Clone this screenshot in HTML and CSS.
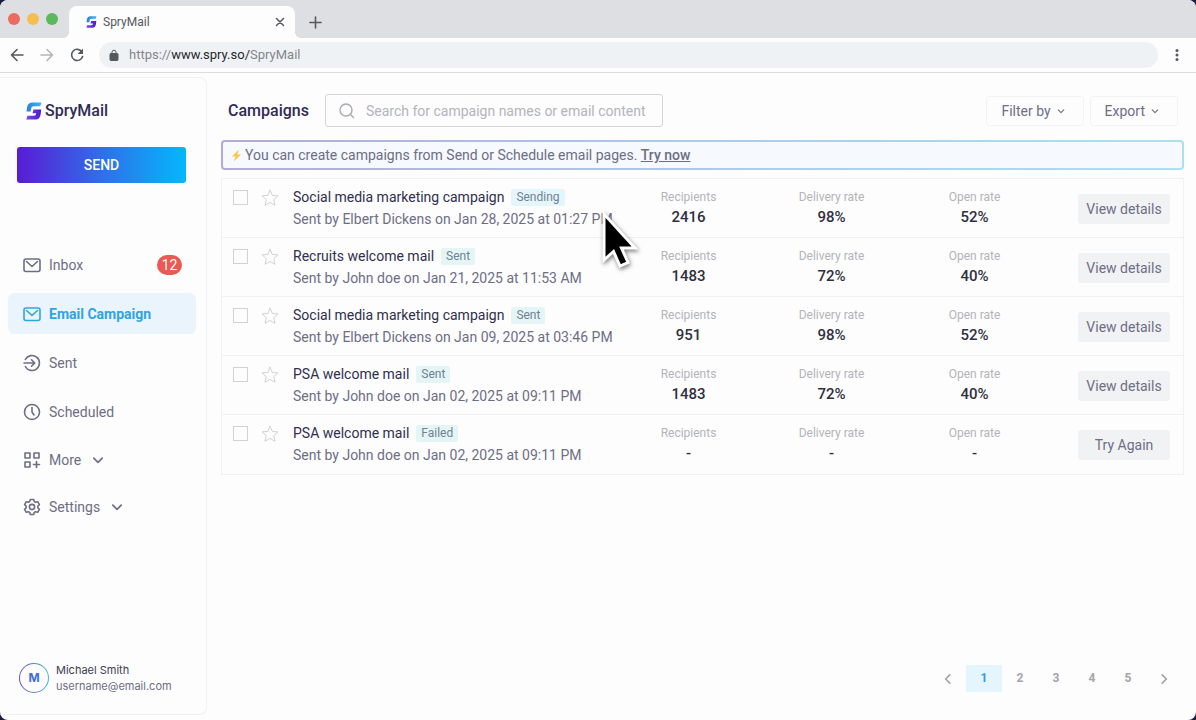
FILE: index.html
```html
<!DOCTYPE html>
<html lang="en">
<head>
    <meta charset="UTF-8">
    <meta name="viewport" content="width=device-width, initial-scale=1.0">
    <title>SpryMail</title>
    <link rel="stylesheet" href="styles.css">
</head>
<body>

<!-- Shared icons -->
<svg class="sprite" aria-hidden="true">
    <defs>
        <linearGradient id="logoTop" x1="0" y1="0" x2="1" y2="0">
            <stop offset="0" stop-color="#2b7de0"/>
            <stop offset="1" stop-color="#35bdf0"/>
        </linearGradient>
        <linearGradient id="logoBottom" x1="0" y1="0" x2="1" y2="0">
            <stop offset="0" stop-color="#7b4be8"/>
            <stop offset="1" stop-color="#4a1ad0"/>
        </linearGradient>
    </defs>
    <symbol id="logo" viewBox="0 0 16 18">
        <path fill="url(#logoTop)" d="M6.500 0.500H15.500L14.200 4.300H7.500Q5.600 4.300 5.300 6L4.800 9.500H0.500L1.200 5Q2 0.500 6.500 0.500z"/>
        <path fill="url(#logoBottom)" d="M7.500 7.500H15.200L14.700 12Q14 17.500 9.500 17.500H0.300L1.500 13.800H8Q10 13.800 10.300 11.300H6.500z"/>
    </symbol>
    <symbol id="mail" viewBox="0 0 18 18">
        <rect x="1" y="3" width="16" height="12.500" rx="2"/>
        <path d="M3.500 5.500L9 10.500l5.500-5"/>
    </symbol>
    <symbol id="chevron" viewBox="0 0 10 10">
        <path d="M1.500 3.500L5 7l3.500-3.500"/>
    </symbol>
    <symbol id="star" viewBox="0 0 18 18">
        <path d="M9 1.200l2.300 5.200 5.700.5-4.300 3.800 1.300 5.600L9 13.400l-5 2.900 1.300-5.600L1 6.900l5.700-.5z"/>
    </symbol>
</svg>

<div class="window">
    <header class="browser">
        <div class="tab-bar">
            <div class="lights">
                <span class="light red"></span>
                <span class="light yellow"></span>
                <span class="light green"></span>
            </div>
            <div class="tab">
                <svg class="tab-logo"><use href="#logo"/></svg>
                <span class="tab-title">SpryMail</span>
                <button class="plain-btn" aria-label="Close tab">
                    <svg class="icon-close" viewBox="0 0 10 10"><path d="M1.500 1.500l7 7M8.500 1.500l-7 7"/></svg>
                </button>
            </div>
            <button class="plain-btn" aria-label="New tab">
                <svg class="icon-plus" viewBox="0 0 14 14"><path d="M7 1v12M1 7h12"/></svg>
            </button>
        </div>
        <div class="toolbar">
            <button class="plain-btn" aria-label="Back">
                <svg class="icon-nav" viewBox="0 0 16 16"><path d="M14 8H2.500M8 2.500L2.500 8 8 13.500"/></svg>
            </button>
            <button class="plain-btn" aria-label="Forward">
                <svg class="icon-nav muted" viewBox="0 0 16 16"><path d="M2 8h11.500M8 2.500L13.500 8 8 13.500"/></svg>
            </button>
            <button class="plain-btn" aria-label="Reload">
                <svg class="icon-nav" viewBox="0 0 16 16"><path d="M13 5A5.600 5.600 0 1 0 13.600 9.500"/><path class="filled" d="M14 1.500v5.500H8.500z"/></svg>
            </button>
            <div class="address">
                <svg class="icon-lock" viewBox="0 0 10 12"><rect x="1" y="4.500" width="8" height="7" rx="1"/><path d="M3 5V3.200a2 2 0 0 1 4 0V5"/></svg>
                <span class="url">https://<b>www.spry.so/</b>SpryMail</span>
            </div>
            <button class="plain-btn" aria-label="Menu">
                <svg class="icon-dots" viewBox="0 0 4 14"><circle cx="2" cy="2.500" r="1.500"/><circle cx="2" cy="7" r="1.500"/><circle cx="2" cy="11.500" r="1.500"/></svg>
            </button>
        </div>
    </header>

    <div class="app">
        <aside class="sidebar">
            <div class="brand">
                <svg class="brand-logo"><use href="#logo"/></svg>
                <span>SpryMail</span>
            </div>
            <button class="send-btn">SEND</button>

            <nav class="nav">
                <a class="nav-item" href="#">
                    <svg class="icon"><use href="#mail"/></svg>
                    <span>Inbox</span>
                    <span class="count">12</span>
                </a>
                <a class="nav-item active" href="#">
                    <svg class="icon"><use href="#mail"/></svg>
                    <span>Email Campaign</span>
                </a>
                <a class="nav-item" href="#">
                    <svg class="icon" viewBox="0 0 18 18"><path d="M2.300 5.500a7.500 7.500 0 1 1 0 7M1 9h10.500M8.500 5.800L11.700 9l-3.200 3.200"/></svg>
                    <span>Sent</span>
                </a>
                <a class="nav-item" href="#">
                    <svg class="icon" viewBox="0 0 18 18"><circle cx="9" cy="9" r="7.500"/><path d="M9 4.500V9l2 3"/></svg>
                    <span>Scheduled</span>
                </a>
                <button class="nav-item nav-toggle">
                    <svg class="icon" viewBox="0 0 18 18"><rect x="2" y="2" width="5" height="5"/><rect x="11" y="2" width="5" height="5"/><rect x="2" y="11" width="5" height="5"/><path d="M13.500 10.500v6M10.500 13.500h6"/></svg>
                    <span>More</span>
                    <svg class="chevron"><use href="#chevron"/></svg>
                </button>
                <button class="nav-item nav-toggle">
                    <svg class="icon" viewBox="0 0 18 18"><path d="M7.300 1.500h3.400l.6 2.100 1.200.7 2.200-.6 1.700 2.900-1.600 1.600v1.600l1.600 1.600-1.700 2.900-2.200-.6-1.200.7-.6 2.100H7.300l-.6-2.100-1.200-.7-2.200.6-1.700-2.900 1.600-1.600V8.200L1.600 6.600l1.700-2.900 2.200.6 1.200-.7z"/><circle cx="9" cy="9" r="2.600"/></svg>
                    <span>Settings</span>
                    <svg class="chevron"><use href="#chevron"/></svg>
                </button>
            </nav>

            <div class="user">
                <div class="avatar"><span>M</span></div>
                <div>
                    <div class="user-name">Michael Smith</div>
                    <div class="user-email">username@email.com</div>
                </div>
            </div>
        </aside>

        <main class="main">
            <div class="page-head">
                <h1>Campaigns</h1>
                <label class="search">
                    <svg class="icon-search" viewBox="0 0 16 16"><circle cx="7" cy="7" r="6"/><path d="M11.500 11.500l3 3"/></svg>
                    <input type="text" aria-label="Search campaigns" placeholder="Search for campaign names or email content">
                </label>
                <div class="head-actions">
                    <button class="head-btn">Filter by <svg class="chevron small"><use href="#chevron"/></svg></button>
                    <button class="head-btn">Export <svg class="chevron small"><use href="#chevron"/></svg></button>
                </div>
            </div>

            <div class="banner">
                <svg class="bolt" viewBox="0 0 12 14"><path d="M8.500 0.500L1 8h4L3 13.500 11 6H7z"/></svg>
                <span>You can create campaigns from Send or Schedule email pages. <a href="#">Try now</a></span>
            </div>

            <div class="campaigns">
                <div class="campaign">
                    <input type="checkbox" aria-label="Select campaign">
                    <svg class="star"><use href="#star"/></svg>
                    <div class="info">
                        <div class="name">Social media marketing campaign <span class="tag sending">Sending</span></div>
                        <div class="meta">Sent by Elbert Dickens on Jan 28, 2025 at 01:27 PM</div>
                    </div>
                    <div class="stat"><span>Recipients</span><strong>2416</strong></div>
                    <div class="stat"><span>Delivery rate</span><strong>98%</strong></div>
                    <div class="stat"><span>Open rate</span><strong>52%</strong></div>
                    <button class="row-btn">View details</button>
                </div>
                <div class="campaign">
                    <input type="checkbox" aria-label="Select campaign">
                    <svg class="star"><use href="#star"/></svg>
                    <div class="info">
                        <div class="name">Recruits welcome mail <span class="tag">Sent</span></div>
                        <div class="meta">Sent by John doe on Jan 21, 2025 at 11:53 AM</div>
                    </div>
                    <div class="stat"><span>Recipients</span><strong>1483</strong></div>
                    <div class="stat"><span>Delivery rate</span><strong>72%</strong></div>
                    <div class="stat"><span>Open rate</span><strong>40%</strong></div>
                    <button class="row-btn">View details</button>
                </div>
                <div class="campaign">
                    <input type="checkbox" aria-label="Select campaign">
                    <svg class="star"><use href="#star"/></svg>
                    <div class="info">
                        <div class="name">Social media marketing campaign <span class="tag">Sent</span></div>
                        <div class="meta">Sent by Elbert Dickens on Jan 09, 2025 at 03:46 PM</div>
                    </div>
                    <div class="stat"><span>Recipients</span><strong>951</strong></div>
                    <div class="stat"><span>Delivery rate</span><strong>98%</strong></div>
                    <div class="stat"><span>Open rate</span><strong>52%</strong></div>
                    <button class="row-btn">View details</button>
                </div>
                <div class="campaign">
                    <input type="checkbox" aria-label="Select campaign">
                    <svg class="star"><use href="#star"/></svg>
                    <div class="info">
                        <div class="name">PSA welcome mail <span class="tag">Sent</span></div>
                        <div class="meta">Sent by John doe on Jan 02, 2025 at 09:11 PM</div>
                    </div>
                    <div class="stat"><span>Recipients</span><strong>1483</strong></div>
                    <div class="stat"><span>Delivery rate</span><strong>72%</strong></div>
                    <div class="stat"><span>Open rate</span><strong>40%</strong></div>
                    <button class="row-btn">View details</button>
                </div>
                <div class="campaign">
                    <input type="checkbox" aria-label="Select campaign">
                    <svg class="star"><use href="#star"/></svg>
                    <div class="info">
                        <div class="name">PSA welcome mail <span class="tag">Failed</span></div>
                        <div class="meta">Sent by John doe on Jan 02, 2025 at 09:11 PM</div>
                    </div>
                    <div class="stat"><span>Recipients</span><strong>-</strong></div>
                    <div class="stat"><span>Delivery rate</span><strong>-</strong></div>
                    <div class="stat"><span>Open rate</span><strong>-</strong></div>
                    <button class="row-btn">Try Again</button>
                </div>
            </div>

            <nav class="pages" aria-label="Pages">
                <a href="#" aria-label="Previous"><svg class="chevron prev"><use href="#chevron"/></svg></a>
                <a class="current" href="#">1</a>
                <a href="#">2</a>
                <a href="#">3</a>
                <a href="#">4</a>
                <a href="#">5</a>
                <a href="#" aria-label="Next"><svg class="chevron next"><use href="#chevron"/></svg></a>
            </nav>
        </main>
    </div>

    <svg class="cursor" viewBox="0 0 40 60"><path d="M4 4v46l9.500-8.500 6.500 14.500 8-3.500-6.500-14.500H35z"/></svg>
</div>

</body>
</html>
```

FILE: styles.css
```css
* {
    box-sizing: border-box;
}
body {
    margin: 0;
    background-color: #1d1b45;
    color: #6d6e85;
    font-family: Roboto, "Liberation Sans", sans-serif;
    font-size: 14px;
    line-height: 20px;
}
button, input {
    font: inherit;
    color: inherit;
}
button {
    cursor: pointer;
}
a {
    color: inherit;
    text-decoration: none;
}
svg {
    display: block;
    flex: none;
    fill: none;
    stroke: currentColor;
    stroke-linecap: round;
    stroke-linejoin: round;
}
.sprite {
    position: absolute;
    width: 0;
    height: 0;
}
.window {
    position: relative;
    display: flex;
    flex-direction: column;
    min-height: 100vh;
    background-color: #fdfdfd;
    border-radius: 8px;
    overflow: hidden;
}

/* Browser chrome */
.browser {
    border-bottom: 1px solid #dcdcde;
    color: #55585d;
}
.tab-bar {
    display: flex;
    align-items: center;
    height: 38px;
    padding: 6px 12px 0 8px;
    background-color: #dedfe3;
}
.lights {
    display: flex;
    gap: 7px;
    width: 61px;
    padding-bottom: 6px;
}
.light {
    width: 12px;
    height: 12px;
    border-radius: 50%;
}
.red {
    background-color: #ec6a60;
}
.yellow {
    background-color: #f5bf4f;
}
.green {
    background-color: #5bb95b;
}
.tab {
    position: relative;
    display: flex;
    align-items: center;
    width: 226px;
    height: 32px;
    margin-right: 14px;
    padding: 0 10px 0 17px;
    border-radius: 8px 8px 0 0;
    background-color: #fdfdfd;
}
/* Curved feet of the open tab */
.tab::before, .tab::after {
    content: "";
    position: absolute;
    bottom: 0;
    width: 6px;
    height: 6px;
}
.tab::before {
    right: 100%;
    background: radial-gradient(circle at 0 0, transparent 6px, #fdfdfd 6px);
}
.tab::after {
    left: 100%;
    background: radial-gradient(circle at 100% 0, transparent 6px, #fdfdfd 6px);
}
.tab-title {
    flex: 1;
    font-size: 12px;
}
.tab-logo {
    width: 11px;
    height: 12px;
    margin-right: 6px;
    stroke: none;
}
.plain-btn {
    padding: 0;
    border: none;
    background: none;
}
.icon-close {
    width: 10px;
    height: 10px;
    stroke-width: 1.5;
}
.icon-plus {
    width: 13px;
    height: 13px;
    stroke-width: 1.7;
}
.toolbar {
    display: flex;
    align-items: center;
    gap: 14px;
    height: 34px;
    padding: 0 17px 0 9px;
}
.icon-nav {
    width: 16px;
    height: 16px;
    stroke-width: 1.6;
}
.muted {
    color: #b4b5b9;
}
.filled {
    fill: currentColor;
    stroke: none;
}
.address {
    display: flex;
    flex: 1;
    align-items: center;
    gap: 10px;
    height: 26px;
    margin-right: 3px;
    padding: 0 10px;
    border-radius: 13px;
    background-color: #eff2f5;
}
.icon-lock {
    width: 10px;
    height: 12px;
}
.icon-lock rect {
    fill: currentColor;
}
.url {
    color: #85868b;
    font-size: 13px;
}
.url b {
    color: #26272c;
    font-weight: 400;
}
.icon-dots {
    width: 4px;
    height: 14px;
    fill: currentColor;
    stroke: none;
}

/* Sidebar */
.app {
    display: flex;
    flex: 1;
}
.sidebar {
    display: flex;
    flex-direction: column;
    flex: none;
    width: 207px;
    margin: 4px 0 5px;
    border: 1px solid #f0f0f2;
    border-left: none;
    border-radius: 0 8px 8px 0;
}
.brand {
    display: flex;
    align-items: center;
    gap: 3px;
    padding: 23px 26px 0;
    color: #302b54;
    font-size: 16px;
    font-weight: 500;
}
.brand-logo {
    width: 16px;
    height: 18px;
    stroke: none;
}
.send-btn {
    height: 36px;
    margin: 26px 20px 0 17px;
    border: none;
    border-radius: 3px;
    background: linear-gradient(90deg, #5a1bd6, #2f6fe8 50%, #04b8fc);
    color: #fff;
    font-weight: 500;
}
.nav {
    display: flex;
    flex-direction: column;
    gap: 8px;
    margin: 61px 10px 0 8px;
}
.nav-item {
    display: flex;
    align-items: center;
    gap: 8px;
    height: 41px;
    padding: 0 14px 0 15px;
    border: none;
    border-radius: 6px;
    background: none;
    color: #6d6e85;
}
.nav-toggle {
    height: 39px;
}
.nav-item.active {
    background-color: #eaf4fd;
    color: #2fa4e4;
    font-weight: 700;
}
.icon {
    width: 18px;
    height: 18px;
    stroke-width: 1.6;
}
.count {
    width: 25px;
    height: 20px;
    margin-left: auto;
    border-radius: 10px;
    background-color: #ea5952;
    color: #fff;
    text-align: center;
}
.chevron {
    width: 12px;
    height: 12px;
    stroke-width: 1.4;
}
.nav-item .chevron {
    margin-left: 3px;
}
.chevron.small {
    width: 8px;
    height: 8px;
}
.prev {
    transform: rotate(90deg);
}
.next {
    transform: rotate(-90deg);
}
.user {
    display: flex;
    align-items: center;
    gap: 7px;
    margin-top: auto;
    padding: 0 19px 20px;
    font-family: Inter, sans-serif;
    font-size: 11px;
    line-height: 16px;
}
.avatar {
    width: 30px;
    height: 30px;
    padding: 1px;
    border-radius: 50%;
    background: linear-gradient(90deg, #6c4fb8, #3bb9e8);
}
.avatar span {
    display: block;
    height: 28px;
    border-radius: 50%;
    background-color: #fdfdfd;
    color: #3f6fd8;
    font-size: 12px;
    font-weight: 700;
    line-height: 28px;
    text-align: center;
}
.user-name {
    color: #3d3c52;
}

/* Campaigns */
.main {
    display: flex;
    flex: 1;
    flex-direction: column;
    min-width: 0;
    padding: 21px 12px 28px 14px;
}
.page-head {
    display: flex;
    align-items: center;
    padding: 0 6px 0 7px;
}
h1 {
    margin: 0 16px 0 0;
    color: #302b54;
    font-size: 16px;
    font-weight: 500;
}
.search {
    display: flex;
    align-items: center;
    gap: 11px;
    width: 338px;
    height: 33px;
    padding: 0 13px;
    border: 1px solid #d5d5d9;
    border-radius: 3px;
    color: #a9aab3;
}
.icon-search {
    width: 16px;
    height: 16px;
    stroke-width: 1.4;
}
.search input {
    flex: 1;
    min-width: 0;
    padding: 0;
    border: none;
    outline: none;
    background: none;
}
.search input::placeholder {
    color: #b3b4bc;
}
.head-actions {
    display: flex;
    gap: 6px;
    margin-left: auto;
}
.head-btn {
    display: flex;
    align-items: center;
    gap: 6px;
    height: 30px;
    padding: 0 18px 0 14px;
    border: 1px solid #f3f3f5;
    border-radius: 3px;
    background: none;
}
.banner {
    display: flex;
    align-items: center;
    gap: 3px;
    height: 30px;
    margin-top: 13px;
    padding: 0 8px;
    border: 2px solid transparent;
    border-radius: 4px;
    background: linear-gradient(#f6f9fd, #f6f9fd) padding-box, linear-gradient(90deg, #b1acd4, #aecaea 50%, #aae2ed) border-box;
}
.bolt {
    width: 11px;
    height: 13px;
    fill: #f8c64c;
    stroke: none;
}
.banner a {
    font-weight: 500;
    text-decoration: underline;
}
.campaigns {
    margin-top: 8px;
    border: 1px solid #f1f1f3;
}
.campaign {
    display: grid;
    grid-template-columns: 15px 18px 1fr 143px 143px 143px 124px;
    height: 59px;
    padding: 8px 13px 0 11px;
    border-bottom: 1px solid #f1f1f3;
}
.campaign:last-child {
    border-bottom: none;
}
.campaign input {
    appearance: none;
    width: 15px;
    height: 15px;
    margin: 3px 0 0;
    border: 1px solid #d2d2d6;
}
.campaign input:checked {
    background-color: #2fa4e4;
}
.star {
    width: 18px;
    height: 18px;
    margin: 2px 0 0 13px;
    color: #d2d2d8;
}
.info {
    margin-left: 27px;
}
.name {
    display: flex;
    align-items: center;
    gap: 7px;
    color: #302f4d;
    white-space: nowrap;
}
.tag {
    height: 17px;
    padding: 0 5px;
    border-radius: 2px;
    background-color: #e5f5f6;
    color: #6f8291;
    font-size: 12px;
    line-height: 17px;
}
.sending {
    background-color: #e5f5fc;
}
.meta {
    margin-top: 2px;
    white-space: nowrap;
}
.stat {
    display: flex;
    flex-direction: column;
    align-items: center;
}
.stat span {
    color: #b3b4ba;
    font-size: 12px;
}
.stat strong {
    color: #302f42;
    font-size: 15px;
    font-weight: 500;
}
.row-btn {
    width: 92px;
    height: 30px;
    margin-top: 7px;
    padding: 0;
    border: none;
    border-radius: 3px;
    background-color: #f1f2f4;
    justify-self: end;
}

/* Pagination */
.pages {
    display: flex;
    justify-content: flex-end;
    margin-top: auto;
    padding-right: 2px;
    font-size: 12px;
    font-weight: 700;
    line-height: 27px;
    color: #a3a4ad;
}
.pages a {
    display: flex;
    align-items: center;
    justify-content: center;
    width: 36px;
    height: 27px;
}
.pages .current {
    background-color: #e4f5fe;
    color: #3399e6;
}

/* Mouse pointer over the list */
.cursor {
    position: absolute;
    top: 210px;
    left: 600px;
    width: 40px;
    height: 60px;
    fill: #000;
    stroke: #fff;
    stroke-width: 3;
    stroke-linejoin: miter;
    filter: drop-shadow(1px 2px 2px rgba(0, 0, 0, 0.5));
}
```
